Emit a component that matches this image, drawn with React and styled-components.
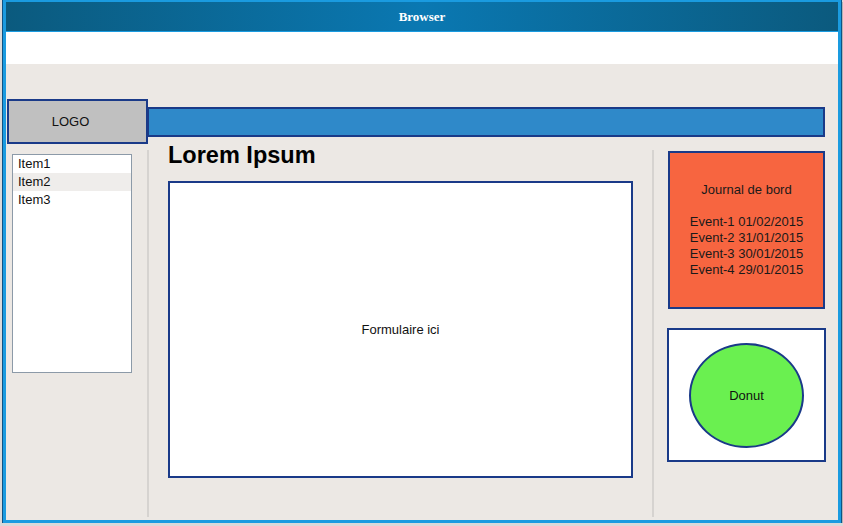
import React from "react";
import styled, { createGlobalStyle } from "styled-components";

const GlobalStyle = createGlobalStyle`
  html, body {
    margin: 0;
    padding: 0;
    background: #d9d9d9;
    font-family: "Liberation Sans", Arial, sans-serif;
  }
`;

const Window = styled.div`
  box-sizing: border-box;
  margin-left: 3px;
  width: 838px;
  height: 523px;
  border: 3px solid #1a9be0;
  border-top-width: 2px;
  box-shadow: 0 0 0 1px #0d5386, 2px 3px 0 1px #b3b3b3;
  display: flex;
  flex-direction: column;
  background: #ece8e4;
`;

const TitleBar = styled.div`
  height: 29px;
  display: flex;
  align-items: center;
  justify-content: center;
  background: linear-gradient(90deg, #0b5a7e 0%, #0a78b2 50%, #0b5a7e 100%);
  color: #ffffff;
  font-family: "Liberation Serif", "Times New Roman", serif;
  font-weight: bold;
  font-size: 13px;
  border-bottom: 1px solid #1a9be0;
`;

const AddressArea = styled.div`
  height: 32px;
  background: #ffffff;
`;

const Page = styled.div`
  flex: 1;
  display: flex;
  flex-direction: column;
  padding-top: 35px;
`;

const Header = styled.div`
  display: flex;
  align-items: center;
  padding: 0 13px 0 1px;
`;

const Logo = styled.div`
  box-sizing: border-box;
  width: 141px;
  height: 45px;
  padding-right: 14px;
  background: #c0c0c0;
  border: 2px solid #1a3a88;
  display: flex;
  align-items: center;
  justify-content: center;
  font-size: 13px;
  color: #111;
  position: relative;
  z-index: 1;
`;

const Banner = styled.div`
  box-sizing: border-box;
  flex: 1;
  height: 30px;
  margin-left: -1px;
  background: #2f89c9;
  border: 2px solid #1a3a88;
`;

const Body = styled.div`
  display: flex;
  margin-top: 6px;
  height: 367px;
`;

const Side = styled.div`
  width: 141px;
  padding: 4px 0 0 6px;
  box-sizing: border-box;
`;

const Separator = styled.div`
  width: 2px;
  background: #d6d3d0;
`;

const List = styled.ul`
  box-sizing: border-box;
  list-style: none;
  margin: 0;
  padding: 0;
  width: 120px;
  height: 219px;
  background: #ffffff;
  border: 1px solid #8c9aa8;
`;

const ListItem = styled.li`
  height: 18px;
  line-height: 18px;
  padding-left: 5px;
  font-size: 13px;
  color: #111;
  background: ${(p) => (p.$active ? "#efedeb" : "transparent")};
`;

const Center = styled.div`
  width: 503px;
  padding-left: 19px;
  box-sizing: border-box;
  display: flex;
  flex-direction: column;
`;

const Title = styled.h1`
  margin: -9px 0 0 0;
  height: 40px;
  line-height: 28px;
  font-size: 23.5px;
  font-weight: bold;
  color: #000;
`;

const FormBox = styled.div`
  box-sizing: border-box;
  width: 465px;
  height: 297px;
  background: #ffffff;
  border: 2px solid #1a3a88;
  display: flex;
  align-items: center;
  justify-content: center;
  font-size: 13px;
  color: #111;
`;

const Aside = styled.div`
  padding: 1px 0 0 14px;
  display: flex;
  flex-direction: column;
`;

const Journal = styled.div`
  box-sizing: border-box;
  width: 157px;
  height: 158px;
  background: #f76540;
  border: 2px solid #1a3a88;
  display: flex;
  flex-direction: column;
  align-items: center;
  justify-content: center;
  font-size: 13px;
  line-height: 16px;
  color: #1a1a1a;
`;

const Line = styled.div`
  height: 16px;
`;

const DonutBox = styled.div`
  box-sizing: border-box;
  width: 159px;
  height: 134px;
  margin: 19px 0 0 -1px;
  background: #ffffff;
  border: 2px solid #1a3a88;
  display: flex;
  align-items: center;
  justify-content: center;
`;

const Donut = styled.div`
  box-sizing: border-box;
  width: 115px;
  height: 105px;
  border-radius: 50%;
  background: #6af050;
  border: 2px solid #1a3a88;
  display: flex;
  align-items: center;
  justify-content: center;
  font-size: 13px;
  color: #111;
`;

const events = [
  "Event-1 01/02/2015",
  "Event-2 31/01/2015",
  "Event-3 30/01/2015",
  "Event-4 29/01/2015",
];

export default function App() {
  return (
    <>
      <GlobalStyle />
      <Window>
        <TitleBar>Browser</TitleBar>
        <AddressArea />
        <Page>
          <Header>
            <Logo>LOGO</Logo>
            <Banner />
          </Header>
          <Body>
            <Side>
              <List>
                <ListItem>Item1</ListItem>
                <ListItem $active>Item2</ListItem>
                <ListItem>Item3</ListItem>
              </List>
            </Side>
            <Separator />
            <Center>
              <Title>Lorem Ipsum</Title>
              <FormBox>Formulaire ici</FormBox>
            </Center>
            <Separator />
            <Aside>
              <Journal>
                <Line>Journal de bord</Line>
                <Line />
                {events.map((e) => (
                  <Line key={e}>{e}</Line>
                ))}
              </Journal>
              <DonutBox>
                <Donut>Donut</Donut>
              </DonutBox>
            </Aside>
          </Body>
        </Page>
      </Window>
    </>
  );
}
